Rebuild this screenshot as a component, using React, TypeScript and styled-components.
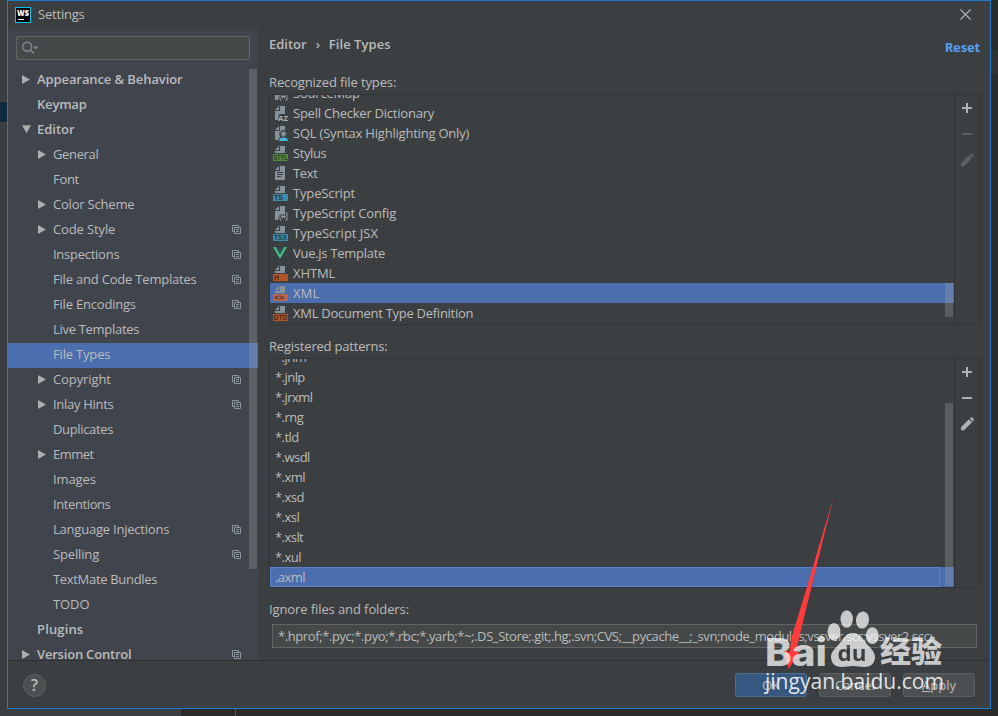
import React from 'react';
import styled, { createGlobalStyle, css } from 'styled-components';

const GlobalStyle = createGlobalStyle`
  * { box-sizing: border-box; }
  body {
    margin: 0;
    background: #2b2b2b;
    font: 13px/20px 'Open Sans', 'Noto Sans', 'Noto Sans CJK SC', sans-serif;
    color: #bbbbbb;
    overflow: hidden;
  }
`;

/* ---------- window frame ---------- */

const Desktop = styled.div`
  position: relative;
  display: grid;
  grid-template: 709px 7px / 7px 984px 7px;
  width: 998px;
  height: 716px;
  overflow: hidden;
  background: #2b2b2b;
`;

const LeftStrip = styled.div`
  padding-top: 102px;
  background: #3c3f41;
  &::after {
    content: '';
    display: block;
    height: 20px;
    background: #0d293e;
  }
`;

const RightStrip = styled.div`
  padding-top: 50px;
  &::after {
    content: '';
    display: block;
    height: 23px;
    background: #323232;
  }
`;

const BottomStrip = styled.div`
  grid-column: 1 / -1;
  display: flex;
`;

const BottomPanel = styled.div`
  width: 181px;
  background: #3c3f41;
`;

const BottomGutter = styled.div`
  width: 55px;
  border-right: 1px solid #555555;
`;

const Dialog = styled.div`
  display: flex;
  flex-direction: column;
  background: #3c3f41;
  border: 1px solid #1a7dd0;
`;

const TitleBar = styled.header`
  display: flex;
  align-items: center;
  height: 27px;
  padding: 1px 19px 0 7px;
  gap: 7px;
  svg:last-child { margin-bottom: 2px; }
`;

const Title = styled.h1`
  flex: 1;
  margin: -2px 0 0;
  font-size: 13px;
  font-weight: 400;
  letter-spacing: -0.2px;
`;

const Body = styled.div`
  display: flex;
  height: 633px;
  border-bottom: 1px solid #2f3132;
`;

const Text = styled.span<{ $track?: number }>`
  white-space: pre;
  letter-spacing: ${(p) => p.$track ?? -0.2}px;
`;

/* ---------- sidebar ---------- */

const Sidebar = styled.nav`
  display: flex;
  flex-direction: column;
  width: 250px;
  background: #40444d;
`;

const SearchBox = styled.div`
  display: flex;
  align-items: center;
  flex: none;
  height: 24px;
  margin: 8px;
  padding-left: 5px;
  border: 1px solid #646464;
  border-radius: 2px;
  background: #45494a;
`;

const Tree = styled.div`
  position: relative;
  flex: 1;
  overflow: hidden;
`;

const TreeRow = styled.div<{ $level: number; $selected?: boolean }>`
  display: flex;
  align-items: center;
  height: 25px;
  padding: 0 17px 3px ${(p) => 13 + p.$level * 16}px;
  font-weight: ${(p) => (p.$level ? 400 : 600)};
  background: ${(p) => (p.$selected ? '#4b6eaf' : 'transparent')};
  svg { flex: none; }
`;

const Arrow = styled.span`
  display: flex;
  width: 16px;
`;

const Grow = styled.span`
  flex: 1;
`;

const Thumb = styled.div<{ $top: number; $height: number }>`
  position: absolute;
  top: ${(p) => p.$top}px;
  right: 1px;
  width: 8px;
  height: ${(p) => p.$height}px;
  background: rgba(166, 166, 166, 0.3);
`;

/* ---------- content ---------- */

const Content = styled.main`
  display: flex;
  flex-direction: column;
  flex: 1;
  padding: 5px 10px 0 11px;
`;

const ContentHeader = styled.div`
  display: flex;
  justify-content: space-between;
  height: 39px;
  font-weight: 600;
`;

const Crumbs = styled.div`
  display: flex;
  gap: 9px;
  height: 22px;
  align-items: center;
`;

const ResetLink = styled.a`
  padding-top: 4px;
  color: #589df6;
  letter-spacing: -0.15px;
  font-weight: 700;
`;

const Label = styled.div`
  height: 20px;
  margin-bottom: 2px;
`;

const Panel = styled.section<{ $height: number }>`
  display: flex;
  width: 711px;
  height: ${(p) => p.$height}px;
  margin-bottom: 11px;
  border: 1px solid #313335;
`;

const List = styled.div<{ $pad?: number }>`
  position: relative;
  display: flex;
  flex-direction: column;
  justify-content: flex-end;
  flex: 1;
  padding-bottom: ${(p) => p.$pad ?? 0}px;
  overflow: hidden;
`;

const FileRow = styled.div<{ $selected?: boolean; $focused?: boolean }>`
  display: flex;
  align-items: center;
  flex: none;
  gap: 5px;
  height: 20px;
  padding-left: ${(p) => (p.$focused === undefined ? 2 : 5)}px;
  background: ${(p) => (p.$selected ? '#4b6eaf' : 'transparent')};
  ${(p) =>
    p.$focused &&
    css`
      box-shadow: inset -14px 0 #4b6eaf, inset 0 0 0 1px #5d82c8;
      background: linear-gradient(90deg, transparent 669px, #5d82c8 669px, #5d82c8 670px, transparent 670px) #4b6eaf;
    `}
  svg { flex: none; }
`;

const Tools = styled.div`
  display: flex;
  flex-direction: column;
  align-items: center;
  gap: 10px;
  width: 25px;
  padding-top: 5px;
  border-left: 1px solid #313335;
`;

const IgnoreField = styled.div`
  display: flex;
  align-items: center;
  width: 705px;
  height: 24px;
  margin: 3px 0 0 3px;
  padding: 0 0 1px 5px;
  border: 1px solid #646464;
  background: #45494a;
`;

/* ---------- footer ---------- */

const Footer = styled.footer`
  display: flex;
  align-items: center;
  gap: 12px;
  flex: 1;
  padding: 1px 15px 0 15px;
`;

const HelpButton = styled.button`
  width: 23px;
  height: 23px;
  padding: 0;
  border: 1px solid #5e6060;
  border-radius: 50%;
  background: #4c5052;
  color: #bbbbbb;
  font: 600 16px/20px 'Open Sans', sans-serif;
`;

const Button = styled.button<{ $primary?: boolean }>`
  width: 72px;
  height: 24px;
  padding: 0;
  border: 1px solid ${(p) => (p.$primary ? '#4c708c' : '#5e6060')};
  border-radius: 3px;
  background: ${(p) => (p.$primary ? '#365880' : '#4c5052')};
  color: #bbbbbb;
  font: inherit;
`;

const Overlay = styled.svg`
  position: absolute;
  left: 750px;
  top: 490px;
  pointer-events: none;
`;

/* ---------- icons ---------- */

const WebStormIcon = () => (
  <svg width="16" height="16" viewBox="0 0 16 16">
    <rect width="16" height="16" fill="#07c3f2" />
    <rect x="1" y="1" width="14" height="14" fill="#000" />
    <text x="2" y="8.6" fontFamily="Open Sans" fontWeight="800" fontSize="8" textLength="12" lengthAdjust="spacingAndGlyphs" fill="#fff">WS</text>
    <rect x="3" y="12" width="6" height="1" fill="#fff" />
  </svg>
);

const CloseIcon = () => (
  <svg width="11" height="11" viewBox="0 0 11 11" stroke="#b4b4b4" strokeWidth="1.1">
    <path d="M.5.5l10 10M10.5.5l-10 10" />
  </svg>
);

const SearchIcon = () => (
  <svg width="18" height="14" viewBox="0 0 18 14">
    <circle cx="5.2" cy="5.8" r="4.5" fill="none" stroke="#7d8c93" strokeWidth="1.4" />
    <path d="M8.4 9l3.4 3.4" stroke="#7d8c93" strokeWidth="1.6" />
    <path d="M11 5.5h5.4L13.7 8.4z" fill="#7d8c93" />
  </svg>
);

const Triangle = ({ open }: { open?: boolean }) => (
  <svg width="10" height="10" viewBox="0 0 10 10" fill="#adadad">
    {open ? <path d="M1 1.200h9L5.500 9.200z" /> : <path d="M1 1v9l8-4.500z" />}
  </svg>
);

const ProjectIcon = () => (
  <svg width="9" height="10" viewBox="0 -1 9 10" fill="none" stroke="#8b959d">
    <path d="M2 6.500H.5v-6h6V2" />
    <path d="M2.500 2.500h6v6h-6zM4 4.500h3M4 6.500h3" />
  </svg>
);

type IconKind = 'page' | 'AZ' | 'user' | 'STYL' | 'TS' | 'TSX' | 'json' | 'vue' | 'H' | '<>' | 'DTD';

const BADGE: Record<string, string> = {
  STYL: '#4f8a3c',
  TS: '#3b8bad',
  TSX: '#3b8bad',
  H: '#b65425',
  '<>': '#bf644c',
  DTD: '#b65425',
};

const FileIcon = ({ kind }: { kind: IconKind }) => {
  if (kind === 'vue') {
    return (
      <svg width="16" height="16" viewBox="0 0 16 16">
        <path d="M1 2h3l4 7 4-7h3L8 14z" fill="#41b883" />
        <path d="M4 2h2.600L8 4.500 9.400 2H12L8 9z" fill="#35495e" />
      </svg>
    );
  }
  const badge = BADGE[kind];
  return (
    <svg width="16" height="16" viewBox="0 0 16 16">
      <g fill="#87939a">
        <path d="M7 1L3 5h4z" />
        <path d={badge ? 'M8 1v5H3v2h10V1z' : kind === 'page' ? 'M8 1v5H3v9h10V1z' : kind === 'user' ? 'M8 1v5H3v9h3l2-3-1-4 3-3h3V1z' : 'M8 1v5H3v9h3l1-6h6V1z'} />
      </g>
      {kind === 'page' && <path d="M5 7.500h6M5 9.500h6M5 11.500h4" stroke="#3c3f41" />}
      {kind === 'AZ' && (
        <text x="6" y="15.600" fontFamily="Open Sans" fontWeight="700" fontSize="7" textLength="10" lengthAdjust="spacingAndGlyphs" fill="#a5b0b6">AZ</text>
      )}
      {kind === 'user' && (
        <>
          <circle cx="11.500" cy="8.800" r="2.600" fill="#87939a" stroke="#5b666c" />
          <path d="M7 16c0-2.600 2-3.500 4.500-3.500S16 13.400 16 16z" fill="#40b6e0" />
        </>
      )}
      {kind === 'json' && (
        <g stroke="#9aa7b0" fill="none">
          <path d="M9.500 7.500q-1.500 0-1.500 1.500v1.200L7 11.500l1 1.200V14q0 1.500 1.500 1.500M13.500 7.500q1.500 0 1.500 1.500v1.200l1 1.300-1 1.200V14q0 1.500-1.500 1.500" />
          <path d="M10.200 9.500v4M12.600 9.500v4M9.400 11.500h4.200" />
        </g>
      )}
      {badge && (
        <>
          <rect x="1" y="9" width="15" height="7" fill={badge} />
          <text
            x={kind === 'STYL' || kind === 'DTD' ? 1.5 : 2}
            y="15.200"
            fontFamily="Liberation Sans"
            fontWeight="700"
            fontSize="7"
            textLength={{ STYL: 14, DTD: 14, TSX: 13, TS: 9, H: 5, '<>': 10 }[kind as string]}
            lengthAdjust="spacingAndGlyphs"
            fill="#231f20"
            fillOpacity=".8"
          >
            {kind}
          </text>
        </>
      )}
    </svg>
  );
};

const ToolIcon = ({ kind, disabled }: { kind: 'add' | 'remove' | 'edit'; disabled?: boolean }) => (
  <svg width="16" height="16" viewBox="0 0 16 16" fill={disabled ? '#5c5e5f' : '#afb1b3'}>
    {kind === 'add' && <path d="M7 3h2v4h4v2H9v4H7V9H3V7h4z" />}
    {kind === 'remove' && <path d="M3 7h10v2H3z" />}
    {kind === 'edit' && <path d="M2 11.300L10 3.300l3 3L5 14.300H2zM10.800 2.500l.9-.9q.7-.6 1.400 0l1.500 1.500q.7.700 0 1.400l-.9.900z" />}
  </svg>
);

/* ---------- data ---------- */

type TreeItem = { name: string; level?: number; arrow?: 'open' | 'closed'; project?: boolean; selected?: boolean; track?: number };

const TREE: TreeItem[] = [
  { name: 'Appearance & Behavior', arrow: 'closed', track: -0.09 },
  { name: 'Keymap', track: -0.2 },
  { name: 'Editor', arrow: 'open', track: 0 },
  { name: 'General', level: 1, arrow: 'closed', track: -0.35 },
  { name: 'Font', level: 1, track: -0.3 },
  { name: 'Color Scheme', level: 1, arrow: 'closed' },
  { name: 'Code Style', level: 1, arrow: 'closed', project: true, track: -0.12 },
  { name: 'Inspections', level: 1, project: true, track: -0.26 },
  { name: 'File and Code Templates', level: 1, project: true },
  { name: 'File Encodings', level: 1, project: true },
  { name: 'Live Templates', level: 1, track: -0.3 },
  { name: 'File Types', level: 1, selected: true, track: -0.18 },
  { name: 'Copyright', level: 1, arrow: 'closed', project: true, track: -0.1 },
  { name: 'Inlay Hints', level: 1, arrow: 'closed', project: true, track: -0.3 },
  { name: 'Duplicates', level: 1, track: -0.35 },
  { name: 'Emmet', level: 1, arrow: 'closed', track: -0.5 },
  { name: 'Images', level: 1, track: -0.1 },
  { name: 'Intentions', level: 1, track: -0.4 },
  { name: 'Language Injections', level: 1, project: true, track: -0.22 },
  { name: 'Spelling', level: 1, project: true, track: -0.15 },
  { name: 'TextMate Bundles', level: 1, track: -0.32 },
  { name: 'TODO', level: 1, track: -0.1 },
  { name: 'Plugins', track: 0.15 },
  { name: 'Version Control', arrow: 'closed', project: true },
];

const FILE_TYPES: { name: string; icon: IconKind; selected?: boolean; track?: number }[] = [
  { name: 'SourceMap', icon: 'json' },
  { name: 'Spell Checker Dictionary', icon: 'AZ', track: -0.23 },
  { name: 'SQL (Syntax Highlighting Only)', icon: 'user', track: -0.21 },
  { name: 'Stylus', icon: 'STYL', track: -0.4 },
  { name: 'Text', icon: 'page', track: -0.3 },
  { name: 'TypeScript', icon: 'TS', track: -0.15 },
  { name: 'TypeScript Config', icon: 'json', track: -0.14 },
  { name: 'TypeScript JSX', icon: 'TSX', track: 0 },
  { name: 'Vue.js Template', icon: 'vue', track: -0.27 },
  { name: 'XHTML', icon: 'H', track: -0.1 },
  { name: 'XML', icon: '<>', selected: true, track: 0.1 },
  { name: 'XML Document Type Definition', icon: 'DTD', track: -0.27 },
];

const PATTERNS = ['*.jhm', '*.jnlp', '*.jrxml', '*.rng', '*.tld', '*.wsdl', '*.xml', '*.xsd', '*.xsl', '*.xslt', '*.xul', '.axml'];

const IGNORED =
  '*.hprof;*.pyc;*.pyo;*.rbc;*.yarb;*~;.DS_Store;.git;.hg;.svn;CVS;__pycache__;_svn;node_modules;vssver.scc;vssver2.scc;';

export default function App() {
  return (
    <Desktop>
      <GlobalStyle />
      <LeftStrip />
      <Dialog>
        <TitleBar>
          <WebStormIcon />
          <Title>Settings</Title>
          <CloseIcon />
        </TitleBar>
        <Body>
          <Sidebar>
            <SearchBox>
              <SearchIcon />
            </SearchBox>
            <Tree>
              {TREE.map((item) => (
                <TreeRow key={item.name} $level={item.level ?? 0} $selected={item.selected}>
                  <Arrow>{item.arrow && <Triangle open={item.arrow === 'open'} />}</Arrow>
                  <Text $track={item.track}>{item.name}</Text>
                  <Grow />
                  {item.project && <ProjectIcon />}
                </TreeRow>
              ))}
              <Thumb $top={1} $height={500} />
            </Tree>
          </Sidebar>
          <Content>
            <ContentHeader>
              <Crumbs>
                <Text $track={0}>Editor</Text>
                <Text>›</Text>
                <Text $track={0.05}>File Types</Text>
              </Crumbs>
              <ResetLink>Reset</ResetLink>
            </ContentHeader>
            <Label>
              <Text $track={-0.13}>Recognized file types:</Text>
            </Label>
            <Panel $height={231}>
              <List $pad={1}>
                {FILE_TYPES.map((type) => (
                  <FileRow key={type.name} $selected={type.selected}>
                    <FileIcon kind={type.icon} />
                    <Text $track={type.track}>{type.name}</Text>
                  </FileRow>
                ))}
                <Thumb $top={188} $height={34} />
              </List>
              <Tools>
                <ToolIcon kind="add" />
                <ToolIcon kind="remove" disabled />
                <ToolIcon kind="edit" disabled />
              </Tools>
            </Panel>
            <Label>
              <Text>Registered patterns:</Text>
            </Label>
            <Panel $height={230}>
              <List>
                {PATTERNS.map((pattern) => (
                  <FileRow key={pattern} $focused={pattern === '.axml'}>
                    <Text $track={-0.55}>{pattern}</Text>
                  </FileRow>
                ))}
                <Thumb $top={44} $height={183} />
              </List>
              <Tools>
                <ToolIcon kind="add" />
                <ToolIcon kind="remove" />
                <ToolIcon kind="edit" />
              </Tools>
            </Panel>
            <Label>
              <Text $track={-0.1}>Ignore files and folders:</Text>
            </Label>
            <IgnoreField>
              <Text $track={-0.41}>{IGNORED}</Text>
            </IgnoreField>
          </Content>
        </Body>
        <Footer>
          <HelpButton>?</HelpButton>
          <Grow />
          <Button $primary>OK</Button>
          <Button>Cancel</Button>
          <Button>
            <u>A</u>pply
          </Button>
        </Footer>
      </Dialog>
      <RightStrip />
      <BottomStrip>
        <BottomPanel />
        <BottomGutter />
      </BottomStrip>
      <Overlay width="210" height="220" viewBox="750 490 210 220">
        <defs>
          <mask id="paw">
            <rect x="820" y="600" width="70" height="75" fill="#fff" />
            <text x="837.500" y="661" fontFamily="Open Sans" fontWeight="700" fontSize="22" textLength="29" lengthAdjust="spacingAndGlyphs" fill="#000">du</text>
          </mask>
        </defs>
        <path d="M833.500 497L811.500 587L799 638L796 651L799.500 653L788.500 669L784 650L789.500 652L792 636L807 587z" fill="#ff3b3b" />
        <g fill="#fff" fillOpacity=".72">
          <text x="765" y="665.500" fontFamily="Inter" fontWeight="800" fontSize="38" textLength="62" lengthAdjust="spacingAndGlyphs">Bai</text>
          <ellipse cx="834" cy="631.700" rx="6.500" ry="8.800" />
          <ellipse cx="846.700" cy="619" rx="6.200" ry="8.800" />
          <ellipse cx="862.500" cy="620" rx="6.500" ry="8.600" transform="rotate(8 862.500 620)" />
          <ellipse cx="872.300" cy="635.700" rx="6.500" ry="8.400" />
          <path mask="url(#paw)" d="M853 633c7 0 10 6 13 10s9 8 9 14c0 7-5 10-11 10-4 0-7-1-11-1s-7 1-11 1c-6 0-11-3-11-10 0-6 6-10 9-14s6-10 13-10z" />
          <text x="880" y="662" fontFamily="Noto Sans CJK SC" fontWeight="900" fontSize="30" textLength="62" lengthAdjust="spacingAndGlyphs">经验</text>
        </g>
        <text x="765" y="689" fontFamily="Open Sans" fontWeight="500" fontSize="22" textLength="179" lengthAdjust="spacingAndGlyphs" fill="#fff" fillOpacity=".85">jingyan.baidu.com</text>
      </Overlay>
    </Desktop>
  );
}
